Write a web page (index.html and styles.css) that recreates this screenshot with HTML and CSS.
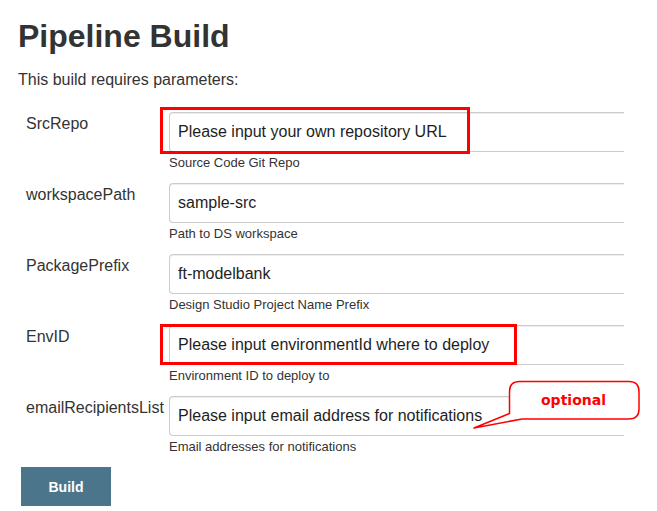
FILE: index.html
```html
<!DOCTYPE html>
<html>
<head>
<meta charset="utf-8">
<link rel="stylesheet" href="styles.css">
</head>
<body>
<div class="screen">
  <h1 class="title">Pipeline Build</h1>
  <p class="desc">This build requires parameters:</p>
  <form class="params">
    <div class="label">SrcRepo</div>
    <div class="field">
      <input class="input" type="text" value="Please input your own repository URL">
      <div class="help">Source Code Git Repo</div>
    </div>
    <div class="label">workspacePath</div>
    <div class="field">
      <input class="input" type="text" value="sample-src">
      <div class="help">Path to DS workspace</div>
    </div>
    <div class="label">PackagePrefix</div>
    <div class="field">
      <input class="input" type="text" value="ft-modelbank">
      <div class="help">Design Studio Project Name Prefix</div>
    </div>
    <div class="label">EnvID</div>
    <div class="field">
      <input class="input" type="text" value="Please input environmentId where to deploy">
      <div class="help">Environment ID to deploy to</div>
    </div>
    <div class="label">emailRecipientsList</div>
    <div class="field">
      <input class="input" type="text" value="Please input email address for notifications">
      <div class="help">Email addresses for notifications</div>
    </div>
  </form>
  <button class="build-btn" type="button">Build</button>

  <div class="mark mark-repo"></div>
  <div class="mark mark-env"></div>

  <svg class="callout" width="180" height="60" viewBox="468 376 180 60">
    <path d="M519.5,381.5 H629 Q639,381.5 639,391.5 V409 Q639,419 629,419 H522 L474,428 L509.5,413.5 V391.5 Q509.5,381.5 519.5,381.5 Z" fill="#fff" stroke="#f00" stroke-width="1.5" stroke-linejoin="round"/>
  </svg>
  <span class="callout-text">optional</span>
</div>
</body>
</html>
```
FILE: styles.css
```css
html, body {
  margin: 0;
  padding: 0;
  background: #fff;
}

body {
  font-family: "Liberation Sans", Arial, sans-serif;
  color: #333;
}

.screen {
  position: relative;
  width: 657px;
  height: 511px;
  overflow: hidden;
  padding: 0 18px;
  box-sizing: border-box;
}

.title {
  margin: 0;
  padding-top: 16px;
  font-size: 32px;
  line-height: 40px;
  font-weight: bold;
  color: #333;
}

.desc {
  margin: 14px 0 0;
  font-size: 16px;
  line-height: 20px;
  color: #333;
}

.params {
  display: grid;
  grid-template-columns: 143px 455px;
  row-gap: 12px;
  margin: 22px 0 0 8px;
}

.label {
  padding-top: 2px;
  font-size: 16px;
  line-height: 20px;
  color: #333;
  white-space: nowrap;
}

.field {
  display: flex;
  flex-direction: column;
}

.input {
  box-sizing: border-box;
  width: 455px;
  height: 40px;
  margin: 0;
  padding: 0 8px;
  border: 1px solid #ccc;
  border-right: 0;
  border-radius: 4px 0 0 4px;
  box-shadow: inset 0 1px 1px rgba(0, 0, 0, 0.075);
  font-family: "Liberation Sans", Arial, sans-serif;
  font-size: 16px;
  color: #1e1e1e;
  background: #fff;
  outline: none;
}

.help {
  margin-top: 2px;
  font-size: 13px;
  line-height: 17px;
  color: #333;
}

.build-btn {
  display: block;
  margin: 12px 0 0 3px;
  width: 90px;
  height: 39px;
  padding: 0;
  border: 0;
  border-radius: 0;
  background: #4b758b;
  color: #fff;
  font-family: "Liberation Sans", Arial, sans-serif;
  font-size: 14px;
  font-weight: bold;
}

.mark {
  position: absolute;
  box-sizing: border-box;
  border: 3px solid #f00;
}

.mark-repo {
  left: 160px;
  top: 107px;
  width: 310px;
  height: 47px;
}

.mark-env {
  left: 160px;
  top: 324px;
  width: 357px;
  height: 41px;
}

.callout {
  position: absolute;
  left: 468px;
  top: 376px;
}

.callout-text {
  position: absolute;
  left: 541px;
  top: 392px;
  font-family: "DejaVu Sans", Verdana, sans-serif;
  font-size: 14px;
  line-height: 16px;
  font-weight: bold;
  color: #f00;
}
```
